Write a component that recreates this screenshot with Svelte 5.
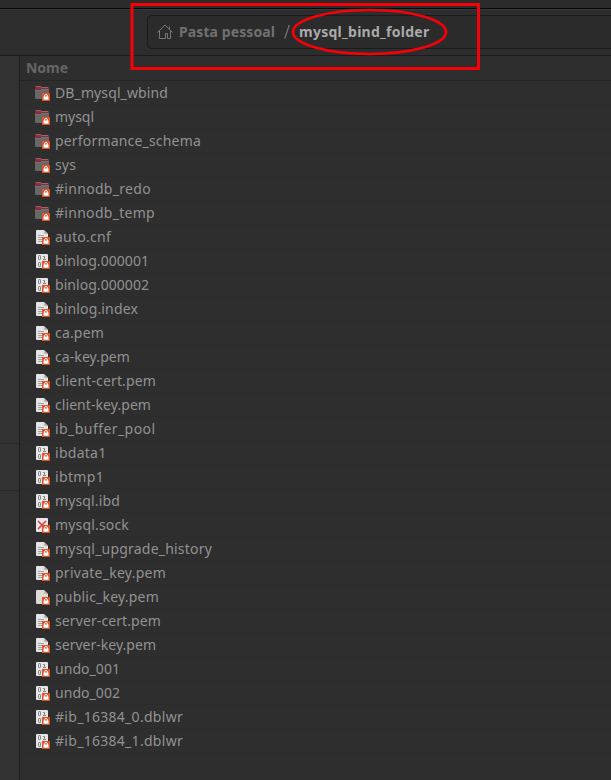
<script>
  const files = [
    ['DB_mysql_wbind', 'folder', 113], ['mysql', 'folder', 39],
    ['performance_schema', 'folder', 146], ['sys', 'folder', 21],
    ['#innodb_redo', 'folder', 96], ['#innodb_temp', 'folder', 100],
    ['auto.cnf', 'text', 56], ['binlog.000001', 'binary', 94],
    ['binlog.000002', 'binary', 94], ['binlog.index', 'text', 83],
    ['ca.pem', 'text', 49], ['ca-key.pem', 'text', 75],
    ['client-cert.pem', 'text', 101], ['client-key.pem', 'text', 96],
    ['ib_buffer_pool', 'text', 100.5], ['ibdata1', 'binary', 51.5],
    ['ibtmp1', 'binary', 49], ['mysql.ibd', 'binary', 65],
    ['mysql.sock', 'socket', 74], ['mysql_upgrade_history', 'text', 157],
    ['private_key.pem', 'text', 111], ['public_key.pem', 'plain', 104],
    ['server-cert.pem', 'text', 106], ['server-key.pem', 'text', 101],
    ['undo_001', 'binary', 65], ['undo_002', 'binary', 65],
    ['#ib_16384_0.dblwr', 'binary', 128], ['#ib_16384_1.dblwr', 'binary', 128]
  ];

  // Spread the letters of a label over the given width.
  function fit(node, width) {
    const natural = node.getBoundingClientRect().width;
    const count = node.textContent.length;
    node.style.letterSpacing = `${(width - natural) / count}px`;
  }
</script>

<div class="window">
  <div class="titlebar"></div>
  <header>
    <nav class="path">
      <svg class="home" width="16" height="16" viewBox="0 0 16 16" fill="none" stroke="#777" stroke-width="1">
        <path d="M.5 8.500 8 1l7.500 7.500M2.500 7v7.500h6V9.500h2v5h3V7M12.500 5V2.500" />
      </svg>
      <b class="parent" use:fit={96}>Pasta pessoal</b>
      <svg class="slash" width="8" height="16" viewBox="0 0 8 16"><path d="M6.300 1 1.700 14.500" stroke="#707070" stroke-width="1.300" /></svg>
      <b class="current" use:fit={130.5}>mysql_bind_folder</b>
    </nav>
    <svg class="marks" width="352" height="70" viewBox="0 0 352 70" fill="none" stroke="#f80008" stroke-width="3">
      <rect x="2" y="2.500" width="346.500" height="64" />
      <ellipse cx="239.500" cy="30" rx="76.500" ry="22" stroke-width="2.700" />
    </svg>
  </header>
  <main>
    <aside><div class="place"></div></aside>
    <section>
      <div class="column"><b use:fit={42}>Nome</b></div>
      {#each files as [name, kind, width]}
        <div class="row">
          <svg width="16" height="16" viewBox="0 0 16 16">
            {#if kind === 'folder'}
              <path d="M1 2.500Q1 1 2.500 1H6l1.500 1H14q1 0 1 1v4H1z" fill="#822e45" />
              <path d="M2 1.500h4l1.500 1H14" stroke="#ae5d63" fill="none" />
              <path d="M1 5h5.500L8 4h7v9q0 1-1 1H2q-1 0-1-1z" fill="#696766" />
              <path d="M1 5.500h5.500L8 4.500h7" fill="none" stroke="#7a7675" stroke-width=".6" />
            {:else}
              {#if kind === 'text' || kind === 'plain'}
                <path d="M3 1h7l4 4v9q0 1-1 1H3q-1 0-1-1V2q0-1 1-1z" fill={kind === 'plain' ? '#dcdad5' : '#e4e4e4'} />
                <path d="M10 1v3q0 1 1 1h3z" fill={kind === 'plain' ? '#bbb9b4' : '#b5b5b5'} />
              {:else}
                <rect x="2" y="1" width="12" height="14" rx="1" fill="#e6e6e6" />
              {/if}
              {#if kind === 'text'}
                <path d="M4 6.500h6M4 8.500h8M4 10.500h8M4 12.500h5" stroke="#a3a3a3" stroke-width="1" />
              {:else if kind === 'binary'}
                <g fill="none" stroke="#858585" stroke-width="1">
                  <rect x="4.500" y="2.500" width="2" height="4" rx=".6" />
                  <rect x="4.500" y="9.500" width="2" height="4" rx=".6" />
                  <path d="M9 3.500h1.500V6M9 6.500h3" />
                </g>
              {:else if kind === 'socket'}
                <path d="m4 4 8 8M12 4l-8 8" stroke="#dd3548" stroke-width="1.500" />
              {/if}
            {/if}
            <rect x="8" y="8" width="8" height="8" fill="#df5426" />
            <path d="M10.500 12V11Q10.500 9.500 12 9.500T13.500 11v1" stroke="#fff" fill="none" stroke-width=".9" />
            <rect x="9.500" y="11.500" width="5" height="3.200" fill="#fff" />
          </svg>
          <span use:fit={width}>{name}</span>
        </div>
      {/each}
    </section>
  </main>
</div>

<style>
  :global(body) { background: #2e2e2e; }
  .window {
    width: 611px; height: 780px; overflow: hidden; box-sizing: border-box;
    display: flex; flex-direction: column;
    background: #2e2e2e; color: #929292;
    font: 14px "Noto Sans", "Open Sans", sans-serif;
  }
  .titlebar { flex: 0 0 8px; background: #2b2b2b; border-bottom: 1px solid #070707; }
  header {
    position: relative; flex: 0 0 47px; box-sizing: border-box;
    border-top: 1px solid #393939; border-bottom: 1px solid #1c1c1c;
    padding: 5px 0 6px 147px; background: #2d2d2d;
  }
  .path {
    display: flex; align-items: center; height: 32px;
    border: 1px solid #1b1b1b; border-right: 0; border-radius: 5px 0 0 5px;
    background: #2b2b2b; padding-left: 9px; white-space: nowrap;
  }
  .path b { position: relative; top: -1px; }
  .home { margin-right: 6px; }
  .parent { color: #717171; }
  .slash { margin: 0 8px 0 8px; }
  .current { color: #aaa; }
  .marks { position: absolute; left: 130px; top: -8px; z-index: 1; }
  main { display: flex; flex: 1; min-height: 0; }
  aside { width: 19px; background: #323232; border-right: 1px solid #202020; }
  .place { height: 46px; margin-top: 387px; border: solid #292929; border-width: 1px 0; }
  section { flex: 1; background: #2e2e2e; }
  .column {
    box-sizing: border-box; height: 25px; line-height: 24px; padding-left: 6px;
    border-bottom: 1px solid #262626; color: #656565;
  }
  .column b { display: inline-block; }
  .row {
    box-sizing: border-box; height: 24px; display: flex; align-items: flex-start;
    padding-left: 14px; border-bottom: 1px solid #2c2c2c;
    line-height: 23px; white-space: nowrap;
  }
  .row svg { flex: none; margin: 4px 5px 0 0; }
</style>
